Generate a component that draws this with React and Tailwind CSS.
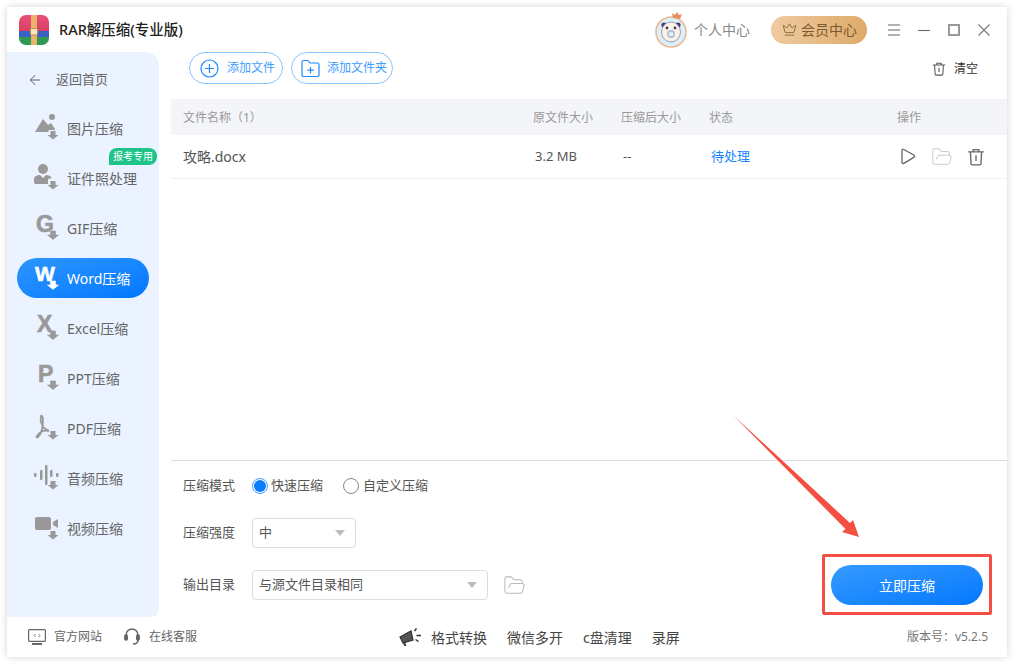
import { ArrowLeft, Crown, FolderOpen } from 'lucide-react';

const font = { fontFamily: '"Noto Sans", "Noto Sans CJK SC", sans-serif' };

// down arrow shared by all the sidebar icons
const Down = () => <path d="M16.500 18h5v4h3l-5.500 4.500L13.500 22h3z" />;

const LetterIcon = ({ letter, x = 2, y = 19, size = 23 }) => (
  <svg width="26" height="30" viewBox="0 0 26 30" fill="currentColor" stroke="currentColor" strokeWidth="0.6" className="overflow-visible">
    <text x={x} y={y} fontFamily="Liberation Sans" fontWeight="700" fontSize={size}>
      {letter}
    </text>
    <Down />
  </svg>
);

const ImageIcon = () => (
  <svg width="26" height="30" viewBox="0 0 26 30" fill="currentColor">
    <circle cx="18" cy="4" r="3" />
    <path d="M1 19 9 6l5 6 3-2 4 6v1h-6l-1 2z" />
    <Down />
  </svg>
);

const PersonIcon = () => (
  <svg width="26" height="30" viewBox="0 0 26 30" fill="currentColor">
    <circle cx="9" cy="6" r="5" />
    <path d="M0 16c0-3 4-4 6-4l3 3 3-3c2 0 5 1 6 3l-4 1v5H1c-1-1-1-3-1-5z" />
    <Down />
  </svg>
);

const PdfIcon = () => (
  <svg width="26" height="30" viewBox="0 0 26 30" fill="none" stroke="currentColor" strokeWidth="1.800">
    <path d="M7 3c-1 4 0 8 3 12l5 3c-5-1-9 0-12 5-1 1 0 2 1 1 3-3 5-9 5-16 0-4-1-6-2-5z" />
    <path fill="currentColor" stroke="none" d="M16.500 18h5v4h3l-5.500 4.500L13.500 22h3z" />
  </svg>
);

const AudioIcon = () => (
  <svg width="26" height="30" viewBox="0 0 26 30" fill="currentColor">
    <rect x="0" y="10" width="2.500" height="4" rx="1" />
    <rect x="6" y="7" width="2.500" height="10" rx="1" />
    <rect x="11" y="2" width="2.500" height="20" rx="1" />
    <rect x="16" y="7" width="2.500" height="7" rx="1" />
    <rect x="22" y="10" width="2.500" height="4" rx="1" />
    <Down />
  </svg>
);

const VideoIcon = () => (
  <svg width="26" height="30" viewBox="0 0 26 30" fill="currentColor">
    <rect x="1" y="4" width="16" height="13" rx="2" />
    <path d="M24 6v9l-5-3V9z" />
    <Down />
  </svg>
);

const TrashIcon = ({ size = 16 }) => (
  <svg width={size} height={size} viewBox="0 0 16 16" fill="none" stroke="currentColor" strokeWidth="1.200">
    <path d="M1 3.500h14M5.500 3.500V1.500h5v2M3 3.500l.6 10.500c0 .6.5 1 1 1h6.800c.5 0 1-.4 1-1L13 3.500M8 6.500v5" />
  </svg>
);

const Caret = () => (
  <svg width="10" height="6" viewBox="0 0 10 6" fill="#bdbdbd">
    <path d="M0 0h10L5 6z" />
  </svg>
);

const Logo = () => (
  <svg width="30" height="30" viewBox="0 0 30 30">
    <defs>
      <clipPath id="logo-clip">
        <rect width="30" height="30" rx="7" />
      </clipPath>
      <linearGradient id="logo-red" x1="0" y1="0" x2="0" y2="1">
        <stop offset="0" stopColor="#e8507a" />
        <stop offset="1" stopColor="#d83f60" />
      </linearGradient>
    </defs>
    <g clipPath="url(#logo-clip)">
      <rect width="30" height="17" fill="url(#logo-red)" />
      <rect y="16" width="30" height="6" fill="#3c62c8" />
      <rect y="22" width="30" height="8" fill="#2f9a52" />
      <rect x="12" width="6" height="30" fill="#ecb36a" />
      <rect x="11.500" y="13.500" width="7" height="6.500" rx="1" fill="#f8e6c4" stroke="#b98b45" />
    </g>
  </svg>
);

const Avatar = () => (
  <svg width="32" height="36" viewBox="0 0 32 36" className="overflow-visible">
    <circle cx="16" cy="20" r="15" fill="#dcf0fb" stroke="#eeb892" strokeWidth="1.600" />
    <circle cx="9" cy="13" r="2.600" fill="#4b3c70" />
    <circle cx="23" cy="13" r="2.600" fill="#4b3c70" />
    <ellipse cx="16" cy="20" rx="9.500" ry="10" fill="#fbf1e4" stroke="#8f86a5" strokeWidth="0.800" />
    <circle cx="12" cy="16" r="1.400" fill="#4b3c70" />
    <circle cx="20" cy="16" r="1.400" fill="#4b3c70" />
    <circle cx="16" cy="22" r="3.200" fill="#dcf0fb" stroke="#a6b6d4" strokeWidth="1.400" />
    <path d="M18 6l-1-5 3 2 2-3 2 3 3-1-2 5z" fill="#e58f63" />
  </svg>
);

const navItems = [
  { label: '图片压缩', icon: <ImageIcon /> },
  { label: '证件照处理', icon: <PersonIcon />, badge: '报考专用' },
  { label: 'GIF压缩', icon: <LetterIcon letter="G" /> },
  { label: 'Word压缩', icon: <LetterIcon letter="W" x={1} y={18} size={21} />, active: true },
  { label: 'Excel压缩', icon: <LetterIcon letter="X" x={3} /> },
  { label: 'PPT压缩', icon: <LetterIcon letter="P" x={4} /> },
  { label: 'PDF压缩', icon: <PdfIcon /> },
  { label: '音频压缩', icon: <AudioIcon /> },
  { label: '视频压缩', icon: <VideoIcon /> },
];

const Sidebar = () => (
  <aside className="w-[152px] shrink-0 rounded-tr-[14px] rounded-br-[8px] bg-[#eaf3ff] pt-[13px]">
    <div className="flex h-[30px] items-center pl-[20px] text-[13px] text-[#666]">
      <ArrowLeft size={16} strokeWidth={1.400} className="text-[#555]" />
      <span className="ml-[13px]">返回首页</span>
    </div>
    <ul className="mt-[13px] flex flex-col gap-[10px]">
      {navItems.map((item) => (
        <li
          key={item.label}
          className={`relative mx-[10px] flex h-[40px] items-center rounded-[20px] pl-[17px] text-[14px] ${
            item.active
              ? 'bg-gradient-to-br from-[#2b95ff] to-[#0078ff] text-white'
              : 'text-[#666] [&>svg]:text-[#999]'
          }`}
        >
          {item.icon}
          <span className="ml-[7px]">{item.label}</span>
          {item.badge && (
            <span className="absolute top-[-10px] right-[-8px] flex h-[17px] w-[48px] items-center justify-center rounded-t-[8px] rounded-br-[8px] bg-[#1fc48a] text-[10px] text-white">
              {item.badge}
            </span>
          )}
        </li>
      ))}
    </ul>
  </aside>
);

const Toolbar = () => (
  <div className="flex h-[47px] shrink-0 items-start pl-[18px] pr-[29px]">
    <button className="flex h-[32px] w-[94px] items-center rounded-[16px] border border-[#8cc4ff] pl-[10px] text-[12px] text-[#3f9bff]">
      <svg width="19" height="19" viewBox="0 0 19 19" fill="none" stroke="#1e88ff" strokeWidth="1.200">
        <circle cx="9.500" cy="9.500" r="8.500" />
        <path d="M9.500 5v9M5 9.500h9" />
      </svg>
      <span className="ml-[8px]">添加文件</span>
    </button>
    <button className="ml-[8px] flex h-[32px] w-[102px] items-center rounded-[16px] border border-[#8cc4ff] pl-[9px] text-[12px] text-[#3f9bff]">
      <svg width="19" height="19" viewBox="0 0 19 19" fill="none" stroke="#1e88ff" strokeWidth="1.200">
        <path d="M1 3c0-1 .6-1.500 1.500-1.500H7L9 4h7.500c1 0 1.500.6 1.500 1.500V16c0 1-.6 1.500-1.500 1.500h-14C1.600 17.500 1 17 1 16z" />
        <path d="M9.500 8v6.500M6.200 11.200h6.600" />
      </svg>
      <span className="ml-[7px]">添加文件夹</span>
    </button>
    <div className="ml-auto flex h-[34px] items-center text-[12px] text-[#333]">
      <span className="text-[#555]">
        <TrashIcon size={14} />
      </span>
      <span className="ml-[8px]">清空</span>
    </div>
  </div>
);

const FileTable = () => (
  <div className="min-h-0 flex-1">
    <div className="grid h-[36px] grid-cols-[350px_88px_88px_188px_1fr] items-center bg-[#f4f5f9] pt-[1px] pl-[12px] text-[12px] text-[#999]">
      <span>文件名称（1）</span>
      <span>原文件大小</span>
      <span>压缩后大小</span>
      <span>状态</span>
      <span>操作</span>
    </div>
    <div className="grid h-[44px] grid-cols-[350px_88px_88px_188px_1fr] items-center border-b border-[#f0f0f3] pl-[12px] text-[13px] text-[#555]">
      <span className="text-[14px]">攻略.docx</span>
      <span className="pl-[2px]">3.2 MB</span>
      <span className="pl-[2px]">--</span>
      <span className="pl-[2px] text-[#1a86ff]">待处理</span>
      <div className="flex items-center text-[#666]">
        <svg width="16" height="18" viewBox="0 0 16 18" fill="none" stroke="currentColor" strokeWidth="1.300" className="ml-[3px]">
          <path d="M2 2.500c0-1 1-1.500 1.800-1l10 5.500c1 .6 1 1.800 0 2.400l-10 6c-.8.5-1.800 0-1.800-1z" />
        </svg>
        <FolderOpen size={22} strokeWidth={1.100} className="ml-[15px] text-[#ccc]" />
        <span className="ml-[14px]">
          <TrashIcon size={18} />
        </span>
      </div>
    </div>
  </div>
);

const CompressPanel = () => (
  <div className="flex h-[157px] shrink-0 items-end justify-between border-t border-[#ddd] pr-[24px] pb-[12px] pl-[12px] text-[13px] text-[#555]">
    <div className="flex h-full flex-col pt-[15px] pb-[5px]">
      <div className="flex h-[20px] items-center">
        <span className="w-[69px]">压缩模式</span>
        <span className="flex size-[16px] items-center justify-center rounded-full border border-[#4a9dff] bg-white">
          <span className="size-[12px] rounded-full bg-[#0a7dff]" />
        </span>
        <span className="ml-[3px]">快速压缩</span>
        <span className="ml-[20px] size-[16px] rounded-full border border-[#888]" />
        <span className="ml-[4px]">自定义压缩</span>
      </div>
      <div className="mt-[22px] flex h-[30px] items-center">
        <span className="w-[69px]">压缩强度</span>
        <div className="flex h-[30px] w-[104px] items-center justify-between rounded-[4px] border border-[#ddd] pr-[10px] pl-[6px]">
          <span>中</span>
          <Caret />
        </div>
      </div>
      <div className="mt-[22px] flex h-[30px] items-center">
        <span className="w-[69px]">输出目录</span>
        <div className="flex h-[30px] w-[236px] items-center justify-between rounded-[4px] border border-[#ddd] pr-[10px] pl-[6px]">
          <span>与源文件目录相同</span>
          <Caret />
        </div>
        <FolderOpen size={23} strokeWidth={1.100} className="ml-[15px] text-[#bbb]" />
      </div>
    </div>
    <button className="h-[40px] w-[152px] rounded-[20px] bg-gradient-to-br from-[#339aff] to-[#0078ff] text-[14px] text-white">
      立即压缩
    </button>
  </div>
);

const Footer = () => (
  <footer className="flex h-[40px] shrink-0 items-center pr-[19px] pl-[21px] text-[#666]">
    <svg width="18" height="16" viewBox="0 0 18 16" fill="none" stroke="#666" strokeWidth="1.200">
      <rect x="0.600" y="0.600" width="16.800" height="11.800" rx="1" />
      <path d="M4 15h10" strokeWidth="2" />
      <path d="M7.500 5 6 6.500 7.500 8M10.500 5 12 6.500 10.500 8" strokeWidth="0.900" />
    </svg>
    <span className="ml-[8px] text-[12px]">官方网站</span>
    <svg width="16" height="18" viewBox="0 0 16 18" fill="none" stroke="#666" strokeWidth="1.500" className="ml-[22px]">
      <path d="M2 9V7a6 6 0 0 1 12 0v2" />
      <rect x="0.800" y="7" width="2.500" height="5" rx="1" fill="#666" />
      <rect x="12.700" y="7" width="2.500" height="5" rx="1" fill="#666" />
      <path d="M14 12c0 2.500-2 4-5 4" />
    </svg>
    <span className="ml-[9px] text-[12px]">在线客服</span>
    <svg width="23" height="18" viewBox="0 0 23 18" className="ml-[202px]">
      <path d="M1 9 12 3l2 9-10 3z" fill="#555" stroke="#333" strokeWidth="1.200" />
      <path d="M5 15l1.500 3" stroke="#333" strokeWidth="2" />
      <path d="M15.500 3 17.500 .5M17.500 7.500H22M16.500 11.500l3 2" stroke="#333" strokeWidth="1.500" />
    </svg>
    <div className="ml-[9px] flex gap-[20px] text-[14px] text-[#444]">
      <span>格式转换</span>
      <span>微信多开</span>
      <span>c盘清理</span>
      <span>录屏</span>
    </div>
    <span className="ml-auto text-[12px] text-[#777]">版本号：v5.2.5</span>
  </footer>
);

const App = () => {
  return (
    <div className="relative h-[664px] w-[1014px] overflow-hidden bg-white p-[7px]" style={font}>
      <div className="flex h-[650px] w-[1000px] flex-col bg-white shadow-[0_0_7px_rgba(0,0,0,0.18)]">
        <header className="flex h-[45px] shrink-0 items-center pr-[17px] pl-[12px]">
          <Logo />
          <span className="ml-[10px] text-[14.500px] font-medium text-[#222]">RAR解压缩(专业版)</span>
          <div className="ml-auto flex items-center">
            <Avatar />
            <span className="ml-[7px] text-[14px] text-[#888]">个人中心</span>
            <div className="ml-[21px] flex h-[28px] w-[96px] items-center rounded-[14px] bg-gradient-to-r from-[#eecba0] to-[#dfaa68] pl-[11px] text-[14px] text-[#7a5a30]">
              <Crown size={15} strokeWidth={1.300} />
              <span className="ml-[4px]">会员中心</span>
            </div>
            <svg width="12" height="12" viewBox="0 0 12 12" stroke="#999" strokeWidth="1.300" className="ml-[21px]">
              <path d="M0 1h12M0 6h12M0 11h12" />
            </svg>
            <svg width="12" height="12" viewBox="0 0 12 12" stroke="#666" strokeWidth="1.100" className="ml-[18px]">
              <path d="M0 6.500h12" />
            </svg>
            <svg width="12" height="12" viewBox="0 0 12 12" fill="none" stroke="#999" strokeWidth="2" className="ml-[18px]">
              <rect x="1" y="1" width="10" height="10" />
            </svg>
            <svg width="12" height="12" viewBox="0 0 12 12" stroke="#777" strokeWidth="1.100" className="ml-[18px]">
              <path d="M.5.500l11 11M11.500.500l-11 11" />
            </svg>
          </div>
        </header>
        <div className="flex min-h-0 flex-1">
          <Sidebar />
          <main className="ml-[12px] flex min-w-0 flex-1 flex-col">
            <Toolbar />
            <FileTable />
            <CompressPanel />
          </main>
        </div>
        <Footer />
      </div>

      {/* annotation drawn over the screenshot */}
      <svg width="1014" height="664" viewBox="0 0 1014 664" className="pointer-events-none absolute top-0 left-0">
        <path d="M734 416 850 523 853 520 859 537 842 532 845.500 529z" fill="#f44f42" />
      </svg>
      <div className="absolute top-[554px] left-[822px] h-[61px] w-[170px] rounded-[2px] border-[3px] border-[#f44f42]" />
    </div>
  );
};

export default App;
